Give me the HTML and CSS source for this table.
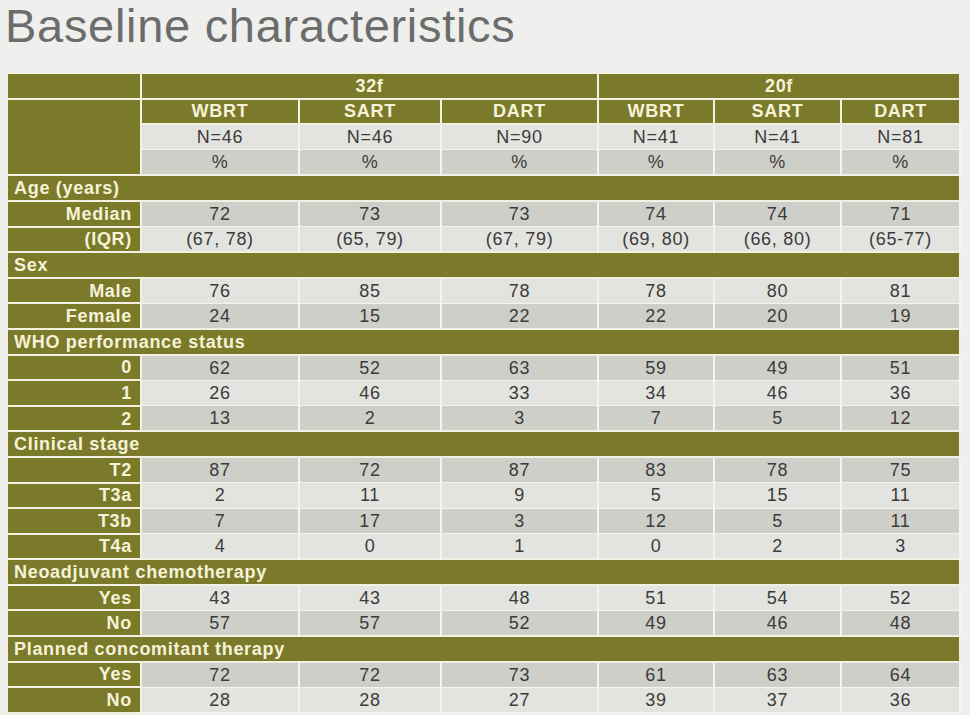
FILE: index.html
```html
<!DOCTYPE html>
<html>
<head>
<meta charset="utf-8">
<link rel="stylesheet" href="styles.css">
</head>
<body>
<h1 class="title">Baseline characteristics</h1>
<table class="bt">
  <colgroup>
    <col class="c0"><col class="c1"><col class="c2"><col class="c3"><col class="c4"><col class="c5"><col class="c6">
  </colgroup>
  <tr class="hd"><td class="lab"></td><td colspan="3">32f</td><td colspan="3">20f</td></tr>
  <tr class="hd"><td class="lab" rowspan="3"></td><td>WBRT</td><td>SART</td><td>DART</td><td>WBRT</td><td>SART</td><td>DART</td></tr>
  <tr class="lt"><td>N=46</td><td>N=46</td><td>N=90</td><td>N=41</td><td>N=41</td><td>N=81</td></tr>
  <tr class="dk"><td>%</td><td>%</td><td>%</td><td>%</td><td>%</td><td>%</td></tr>
  <tr class="sec"><td colspan="7">Age (years)</td></tr>
  <tr class="dk"><td class="lab">Median</td><td>72</td><td>73</td><td>73</td><td>74</td><td>74</td><td>71</td></tr>
  <tr class="lt"><td class="lab">(IQR)</td><td>(67, 78)</td><td>(65, 79)</td><td>(67, 79)</td><td>(69, 80)</td><td>(66, 80)</td><td>(65-77)</td></tr>
  <tr class="sec"><td colspan="7">Sex</td></tr>
  <tr class="lt"><td class="lab">Male</td><td>76</td><td>85</td><td>78</td><td>78</td><td>80</td><td>81</td></tr>
  <tr class="dk"><td class="lab">Female</td><td>24</td><td>15</td><td>22</td><td>22</td><td>20</td><td>19</td></tr>
  <tr class="sec"><td colspan="7">WHO performance status</td></tr>
  <tr class="dk"><td class="lab">0</td><td>62</td><td>52</td><td>63</td><td>59</td><td>49</td><td>51</td></tr>
  <tr class="lt"><td class="lab">1</td><td>26</td><td>46</td><td>33</td><td>34</td><td>46</td><td>36</td></tr>
  <tr class="dk"><td class="lab">2</td><td>13</td><td>2</td><td>3</td><td>7</td><td>5</td><td>12</td></tr>
  <tr class="sec"><td colspan="7">Clinical stage</td></tr>
  <tr class="dk"><td class="lab">T2</td><td>87</td><td>72</td><td>87</td><td>83</td><td>78</td><td>75</td></tr>
  <tr class="lt"><td class="lab">T3a</td><td>2</td><td>11</td><td>9</td><td>5</td><td>15</td><td>11</td></tr>
  <tr class="dk"><td class="lab">T3b</td><td>7</td><td>17</td><td>3</td><td>12</td><td>5</td><td>11</td></tr>
  <tr class="lt"><td class="lab">T4a</td><td>4</td><td>0</td><td>1</td><td>0</td><td>2</td><td>3</td></tr>
  <tr class="sec"><td colspan="7">Neoadjuvant chemotherapy</td></tr>
  <tr class="lt"><td class="lab">Yes</td><td>43</td><td>43</td><td>48</td><td>51</td><td>54</td><td>52</td></tr>
  <tr class="dk"><td class="lab">No</td><td>57</td><td>57</td><td>52</td><td>49</td><td>46</td><td>48</td></tr>
  <tr class="sec"><td colspan="7">Planned concomitant therapy</td></tr>
  <tr class="dk"><td class="lab">Yes</td><td>72</td><td>72</td><td>73</td><td>61</td><td>63</td><td>64</td></tr>
  <tr class="lt"><td class="lab">No</td><td>28</td><td>28</td><td>27</td><td>39</td><td>37</td><td>36</td></tr>
</table>
</body>
</html>
```
FILE: styles.css
```css
html, body {
  margin: 0;
  padding: 0;
  background: #efefed;
  width: 970px;
  height: 715px;
  overflow: hidden;
}
body {
  font-family: "Liberation Sans", Arial, sans-serif;
}
.title {
  margin: 0 0 20px 5px;
  font-size: 47px;
  line-height: 52px;
  font-weight: normal;
  color: #6c6c6c;
  letter-spacing: 0.7px;
}
.bt {
  margin-left: 6px;
  width: 953px;
  border-collapse: collapse;
  table-layout: fixed;
  font-size: 18px;
  letter-spacing: 0.7px;
}
.c0 { width: 134px; }
.c1 { width: 158px; }
.c2 { width: 142px; }
.c3 { width: 157px; }
.c4 { width: 116px; }
.c5 { width: 127px; }
.c6 { width: 119px; }
.bt tr { height: 25.6px; }
.bt td {
  padding: 0 7px;
  border: 2px solid #f1f0e3;
  text-align: center;
  color: #3b3b3b;
  line-height: 20px;
  white-space: nowrap;
}
.bt tr.lt td { background: #e3e3e0; border-top-width: 1px; border-bottom-width: 1px; border-color: #f4f4f1; }
.bt tr.dk td { background: #cfcfca; border-top-width: 1px; border-bottom-width: 1px; border-color: #f4f4f1; }
.bt tr.hd td {
  background: #7b7a2b;
  color: #f6f2d8;
  font-weight: bold;
  border-color: #f1f0e3;
}
.bt tr.sec td {
  background: #7b7a2b;
  color: #f6f2d8;
  font-weight: bold;
  text-align: left;
  padding-left: 6px;
  border-color: #f1f0e3;
  border-top-width: 2px;
  border-bottom-width: 2px;
}
.bt td.lab {
  background: #7b7a2b !important;
  color: #f6f2d8;
  font-weight: bold;
  text-align: right;
  padding-right: 8px;
  border-color: #f1f0e3 !important;
  border-top-width: 2px !important;
  border-bottom-width: 2px !important;
}
```
